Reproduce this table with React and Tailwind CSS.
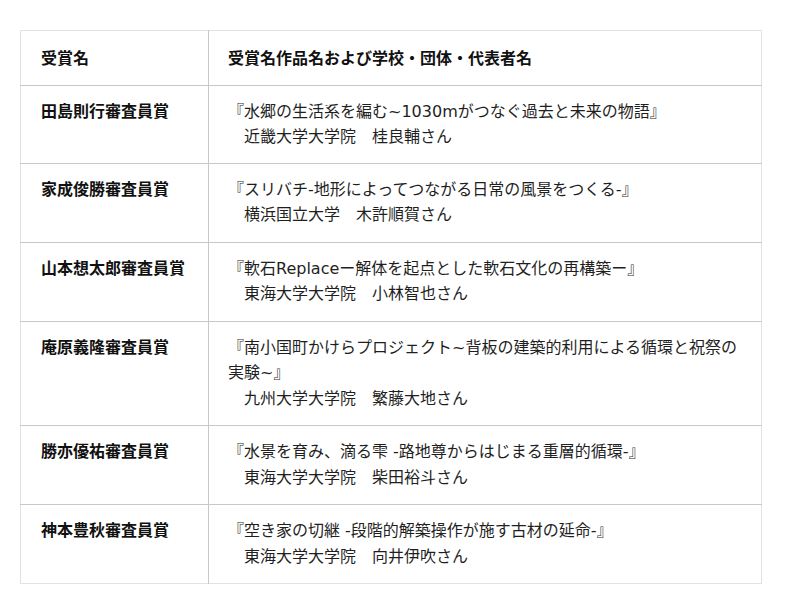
import React from "react";

const rows = [
  {
    name: "田島則行審査員賞",
    lines: ["『水郷の生活系を編む~1030mがつなぐ過去と未来の物語』", "　近畿大学大学院　桂良輔さん"],
  },
  {
    name: "家成俊勝審査員賞",
    lines: ["『スリバチ-地形によってつながる日常の風景をつくる-』", "　横浜国立大学　木許順賀さん"],
  },
  {
    name: "山本想太郎審査員賞",
    lines: ["『軟石Replaceー解体を起点とした軟石文化の再構築ー』", "　東海大学大学院　小林智也さん"],
  },
  {
    name: "庵原義隆審査員賞",
    lines: [
      "『南小国町かけらプロジェクト~背板の建築的利用による循環と祝祭の実験~』",
      "　九州大学大学院　繁藤大地さん",
    ],
  },
  {
    name: "勝亦優祐審査員賞",
    lines: ["『水景を育み、滴る雫 -路地尊からはじまる重層的循環-』", "　東海大学大学院　柴田裕斗さん"],
  },
  {
    name: "神本豊秋審査員賞",
    lines: ["『空き家の切継 -段階的解築操作が施す古材の延命-』", "　東海大学大学院　向井伊吹さん"],
  },
];

export default function App() {
  return (
    <div
      className="w-[800px] h-[614px] bg-white pt-[30px] pl-[20px]"
      style={{ fontFamily: '"DejaVu Sans", "Noto Sans CJK JP", sans-serif' }}
    >
      <table className="w-[742px] border-collapse border border-[#e2e2e2] text-[16px] leading-[25.5px]">
        <tbody>
          <tr className="border-b border-[#c8c8c8]">
            <th className="w-[188px] border-r border-[#c8c8c8] pl-[20px] pr-[10px] pt-[15px] pb-[13px] text-left align-top font-bold text-[#111111]">
              受賞名
            </th>
            <th className="pl-[19px] pr-[20px] pt-[15px] pb-[13px] text-left align-top font-bold text-[#111111]">
              受賞名作品名および学校・団体・代表者名
            </th>
          </tr>
          {rows.map((r, i) => (
            <tr key={i} className={i < rows.length - 1 ? "border-b border-[#c8c8c8]" : ""}>
              <td
                className={
                  "border-r border-[#c8c8c8] pl-[20px] pr-[10px] pt-[13px] align-top font-bold text-[#111111] " +
                  (i === 0 ? "pb-[13px]" : "pb-[14px]")
                }
              >
                {r.name}
              </td>
              <td
                className={
                  "pl-[19px] pr-[20px] pt-[13px] align-top text-[#1f1f1f] " + (i === 0 ? "pb-[13px]" : "pb-[14px]")
                }
              >
                {r.lines.map((l, j) => (
                  <div key={j}>{l}</div>
                ))}
              </td>
            </tr>
          ))}
        </tbody>
      </table>
    </div>
  );
}
